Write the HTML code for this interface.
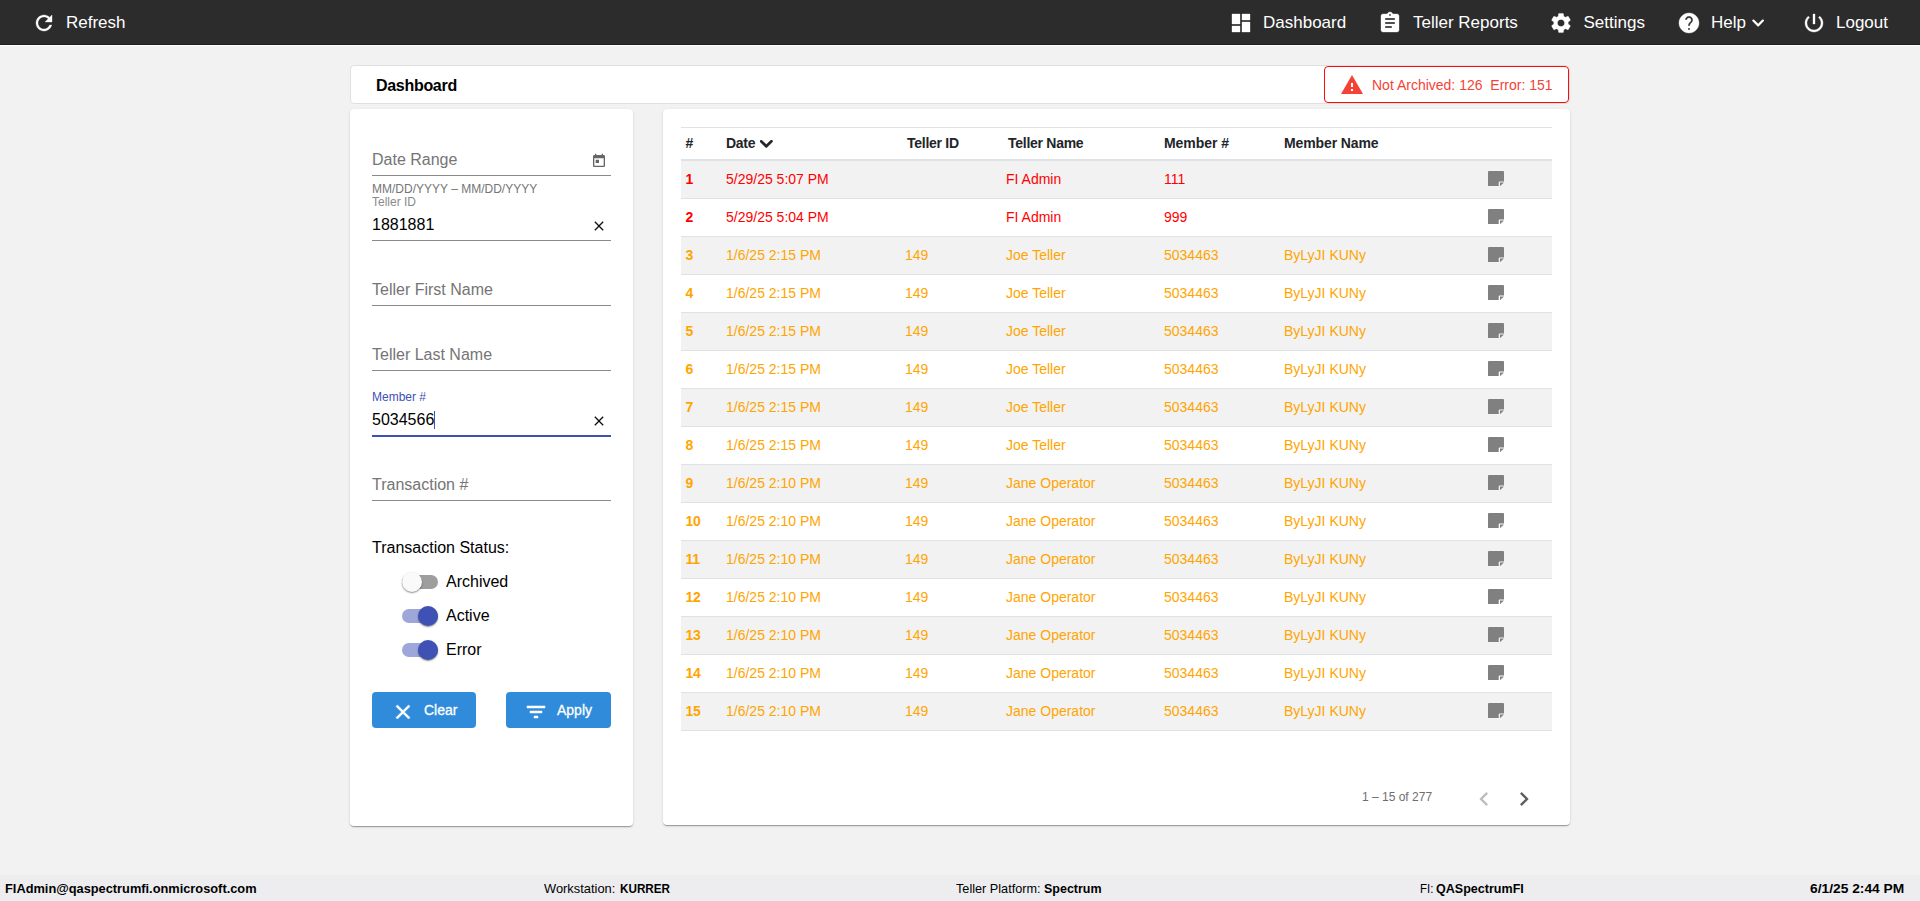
<!DOCTYPE html>
<html lang="en">
<head>
<meta charset="utf-8">
<title>Dashboard</title>
<style>
*{box-sizing:border-box;margin:0;padding:0}
html,body{width:1920px;height:901px;overflow:hidden}
body{background:#f2f2f2;font-family:"Liberation Sans",Arial,sans-serif;color:#000;position:relative}
.abs{position:absolute}
/* nav */
#nav{position:absolute;left:0;top:0;width:1920px;height:46px;background:#2c2c2c;border-bottom:1px solid #fff}
#nav:after{content:'';position:absolute;left:0;top:44px;width:1920px;height:1px;background:#1e1e1e}
.ni{position:absolute;top:11px;height:24px;white-space:nowrap;color:#fff;font-size:17px;line-height:24px}
.ni svg{position:absolute;left:0;top:0;width:24px;height:24px;fill:#fff;stroke:#fff;stroke-width:.35}
.ni span{position:absolute;top:0px}
/* title */
#title{position:absolute;left:350px;top:65px;width:1220px;height:39px;background:#fff;border:1px solid #e0e0e0;border-radius:4px}
#title span{position:absolute;left:25px;top:10px;font-weight:bold;font-size:16px;letter-spacing:-.3px;line-height:20px;color:#000}
#alert{position:absolute;left:1324px;top:66px;width:245px;height:37px;background:#fff;border:1px solid #fd0a0a;border-radius:4px;color:#f44336;font-size:14px}
#alert svg{position:absolute;left:15px;top:6px;width:24px;height:24px;fill:#f44336}
#alert span{position:absolute;left:47px;top:10px;line-height:16px;white-space:pre}
/* panels */
.card{position:absolute;background:#fff;border-radius:4px;box-shadow:0 2px 1px -1px rgba(0,0,0,.2),0 1px 1px 0 rgba(0,0,0,.14),0 1px 3px 0 rgba(0,0,0,.12)}
#left{left:350px;top:109px;width:283px;height:717px}
#right{left:663px;top:109px;width:907px;height:716px}
/* form */
.lbl{position:absolute;left:372px;font-size:16px;line-height:18px;color:#757575;white-space:nowrap}
.sm{position:absolute;left:372px;font-size:12px;line-height:14px;color:#757575;white-space:nowrap}
.val{position:absolute;left:372px;font-size:16px;line-height:18px;color:#000;white-space:nowrap}
.ul{position:absolute;left:372px;width:239px;height:1px;background:#8a8a8a}
.ic16{position:absolute;width:16px;height:16px}
/* toggles */
.trk{position:absolute;left:402px;width:36px;height:14px;border-radius:7px}
.thb{position:absolute;width:20px;height:20px;border-radius:50%;box-shadow:0 1px 2px rgba(0,0,0,.35),0 1px 1px rgba(0,0,0,.14)}
.tl{position:absolute;left:446px;font-size:16px;line-height:18px;color:#000}
.btn{position:absolute;top:692px;height:36px;background:#308cdb;border-radius:4px;color:#fff;font-size:14px;-webkit-text-stroke:.3px #fff}
.btn svg{position:absolute;top:8px;width:24px;height:24px;fill:#fff;stroke:#fff;stroke-width:.5}
.btn span{position:absolute;top:10px;line-height:16px}
/* table */
table{position:absolute;left:681px;top:127px;width:871px;border-collapse:separate;border-spacing:0;font-size:14px;table-layout:fixed}
th{height:34px;border-top:1px solid #dee2e6;border-bottom:2px solid #dee2e6;text-align:left;font-weight:bold;font-size:14px;letter-spacing:-0.27px;color:#212529;padding:0 0 2px 5px;vertical-align:middle;white-space:nowrap}
td{height:38px;border-bottom:1px solid #dee2e6;padding:0 0 2px 4px;vertical-align:middle;white-space:nowrap;line-height:16px}
tr:nth-child(odd) td{background:#f2f2f2}
tr.r td{color:#ff0000}
tr.o td{color:#ffa500}
td.c0{font-weight:bold;padding-left:4.5px;letter-spacing:-.35px}
td.c1,td.c4,td.c5{padding-left:5px}
th.h2,th.h3{padding-left:6px}
.note{width:16px;height:15.2px;fill:#808080;display:block;position:relative;left:1px;top:0px}
.chev{display:inline-block;width:12.6px;height:7.6px;fill:#212529;stroke:#212529;stroke-width:18;margin-left:5px;position:relative;top:0px}
/* pager */
#pg{position:absolute;left:1362px;top:790px;font-size:12px;line-height:14px;color:#6e6e6e;white-space:nowrap}
.pb{position:absolute;top:785px;width:28px;height:28px}
/* footer */
#foot{position:absolute;left:0;top:875px;width:1920px;height:26px;background:#ededef;font-size:13px;color:#000}
#foot span{position:absolute;top:6px;line-height:16px;white-space:pre;transform-origin:0 0}
#foot .fb{font-weight:bold}
</style>
</head>
<body>
<div id="nav">
  <div class="ni" style="left:32px"><svg viewBox="0 0 24 24"><path d="M17.65 6.35C16.2 4.9 14.21 4 12 4c-4.42 0-7.99 3.58-7.99 8s3.57 8 7.99 8c3.73 0 6.84-2.55 7.73-6h-2.08c-.82 2.33-3.04 4-5.65 4-3.31 0-6-2.69-6-6s2.69-6 6-6c1.66 0 3.14.69 4.22 1.78L13 11h7V4l-2.35 2.35z"/></svg><span style="left:34px">Refresh</span></div>
  <div class="ni" style="left:1229px"><svg viewBox="0 0 24 24"><path d="M3 13h8V3H3v10zm0 8h8v-6H3v6zm10 0h8V11h-8v10zm0-18v6h8V3h-8z"/></svg><span style="left:34px">Dashboard</span></div>
  <div class="ni" style="left:1378px"><svg viewBox="0 0 24 24"><path d="M19 3h-4.18C14.4 1.84 13.3 1 12 1c-1.3 0-2.4.84-2.82 2H5c-1.1 0-2 .9-2 2v14c0 1.1.9 2 2 2h14c1.1 0 2-.9 2-2V5c0-1.1-.9-2-2-2zm-7 0c.55 0 1 .45 1 1s-.45 1-1 1-1-.45-1-1 .45-1 1-1zm2 14H7v-2h7v2zm3-4H7v-2h10v2zm0-4H7V7h10v2z"/></svg><span style="left:35px">Teller Reports</span></div>
  <div class="ni" style="left:1549px"><svg viewBox="0 0 24 24"><path d="M19.14 12.94c.04-.3.06-.61.06-.94 0-.32-.02-.64-.07-.94l2.03-1.58c.18-.14.23-.41.12-.61l-1.92-3.32c-.12-.22-.37-.29-.59-.22l-2.39.96c-.5-.38-1.03-.7-1.62-.94l-.36-2.54c-.04-.24-.24-.41-.48-.41h-3.84c-.24 0-.43.17-.47.41l-.36 2.54c-.59.24-1.13.57-1.62.94l-2.39-.96c-.22-.08-.47 0-.59.22L2.74 8.87c-.12.21-.08.47.12.61l2.03 1.58c-.05.3-.09.63-.09.94s.02.64.07.94l-2.03 1.58c-.18.14-.23.41-.12.61l1.92 3.32c.12.22.37.29.59.22l2.39-.96c.5.38 1.03.7 1.62.94l.36 2.54c.05.24.24.41.48.41h3.84c.24 0 .44-.17.47-.41l.36-2.54c.59-.24 1.13-.56 1.62-.94l2.39.96c.22.08.47 0 .59-.22l1.92-3.32c.12-.22.07-.47-.12-.61l-2.01-1.58zM12 15.6c-1.98 0-3.6-1.62-3.6-3.6s1.62-3.6 3.6-3.6 3.6 1.62 3.6 3.6-1.62 3.6-3.6 3.6z"/></svg><span style="left:34.5px">Settings</span></div>
  <div class="ni" style="left:1677px"><svg viewBox="0 0 24 24"><path d="M12 2C6.48 2 2 6.48 2 12s4.48 10 10 10 10-4.48 10-10S17.52 2 12 2zm1 17h-2v-2h2v2zm2.07-7.75l-.9.92C13.45 12.9 13 13.5 13 15h-2v-.5c0-1.1.45-2.1 1.17-2.83l1.24-1.26c.37-.36.59-.86.59-1.41 0-1.1-.9-2-2-2s-2 .9-2 2H8c0-2.21 1.79-4 4-4s4 1.790 4 4c0 .88-.36 1.68-.93 2.25z"/></svg><span style="left:34px">Help</span><svg viewBox="0 0 448 512" style="left:75px;top:5.2px;width:12.25px;height:14px"><path d="M207.029 381.476L12.686 187.132c-9.373-9.373-9.373-24.569 0-33.941l22.667-22.667c9.357-9.357 24.522-9.375 33.901-.04L224 284.505l154.745-154.021c9.379-9.335 24.544-9.317 33.901.04l22.667 22.667c9.373 9.373 9.373 24.569 0 33.941L240.971 381.476c-9.373 9.372-24.569 9.372-33.942 0z"/></svg></div>
  <div class="ni" style="left:1802px"><svg viewBox="0 0 24 24"><path d="M13 3h-2v10h2V3zm4.83 2.17l-1.42 1.42C17.99 7.86 19 9.81 19 12c0 3.87-3.13 7-7 7s-7-3.13-7-7c0-2.19 1.01-4.140 2.58-5.420L6.170 5.170C4.230 6.820 3 9.260 3 12c0 4.970 4.030 9 9 9s9-4.030 9-9c0-2.740-1.230-5.180-3.170-6.830z"/></svg><span style="left:34px">Logout</span></div>
</div>

<div id="title"><span>Dashboard</span></div>
<div id="alert"><svg viewBox="0 0 24 24"><path d="M1 21h22L12 2 1 21zm12-3h-2v-2h2v2zm0-4h-2v-4h2v4z"/></svg><span>Not Archived: 126&nbsp; Error: 151</span></div>

<div class="card" id="left"></div>
<div class="card" id="right"></div>

<!-- form -->
<div class="lbl" style="top:151px">Date Range</div>
<svg class="ic16" style="left:591px;top:153px" viewBox="0 0 24 24"><path fill="#666" d="M19 3h-1V1h-2v2H8V1H6v2H5c-1.11 0-1.99.9-1.99 2L3 19c0 1.1.89 2 2 2h14c1.1 0 2-.9 2-2V5c0-1.1-.9-2-2-2zm0 16H5V8h14v11zM7 10h5v5H7z"/></svg>
<div class="ul" style="top:175px"></div>
<div class="sm" style="top:182px">MM/DD/YYYY – MM/DD/YYYY</div>
<div class="sm" style="top:195px;color:#8a8a8a">Teller ID</div>
<div class="val" style="top:216px">1881881</div>
<svg class="ic16" style="left:591px;top:218px" viewBox="0 0 24 24"><path fill="#111" d="M19 6.41L17.59 5 12 10.59 6.41 5 5 6.41 10.59 12 5 17.59 6.41 19 12 13.41 17.59 19 19 17.59 13.41 12z"/></svg>
<div class="ul" style="top:240px"></div>
<div class="lbl" style="top:281px">Teller First Name</div>
<div class="ul" style="top:305px"></div>
<div class="lbl" style="top:346px">Teller Last Name</div>
<div class="ul" style="top:370px"></div>
<div class="sm" style="top:390px;color:#3f51b5">Member #</div>
<div class="val" style="top:411px">5034566</div>
<div class="abs" style="left:434px;top:411px;width:1px;height:18px;background:#3f51b5"></div>
<svg class="ic16" style="left:591px;top:413px" viewBox="0 0 24 24"><path fill="#111" d="M19 6.41L17.59 5 12 10.59 6.41 5 5 6.41 10.590 12 5 17.59 6.41 19 12 13.41 17.59 19 19 17.59 13.41 12z"/></svg>
<div class="ul" style="top:435px;height:2px;background:#3f51b5"></div>
<div class="lbl" style="top:476px">Transaction #</div>
<div class="ul" style="top:500px"></div>
<div class="val" style="top:539px">Transaction Status:</div>

<div class="trk" style="top:575px;background:#9e9e9e"></div><div class="thb" style="left:402px;top:572px;background:#fafafa"></div><div class="tl" style="top:573px">Archived</div>
<div class="trk" style="top:609px;background:#9ea7da"></div><div class="thb" style="left:418px;top:606px;background:#3f51b5"></div><div class="tl" style="top:607px">Active</div>
<div class="trk" style="top:643px;background:#9ea7da"></div><div class="thb" style="left:418px;top:640px;background:#3f51b5"></div><div class="tl" style="top:641px">Error</div>

<div class="btn" style="left:372px;width:104px"><svg style="left:18.5px" viewBox="0 0 24 24"><path d="M19 6.41L17.59 5 12 10.59 6.41 5 5 6.41 10.59 12 5 17.59 6.41 19 12 13.41 17.59 19 19 17.59 13.41 12z"/></svg><span style="left:52px">Clear</span></div>
<div class="btn" style="left:506px;width:105px"><svg style="left:18px" viewBox="0 0 24 24"><path d="M10 18h4v-2h-4v2zM3 6v2h18V6H3zm3 7h12v-2H6v2z"/></svg><span style="left:51px">Apply</span></div>

<!-- table -->
<table>
<colgroup><col style="width:40px"><col style="width:180px"><col style="width:101px"><col style="width:157px"><col style="width:120px"><col style="width:204px"><col></colgroup>
<thead><tr><th style="padding-left:4.5px">#</th><th>Date<svg class="chev" viewBox="12 123 424 266" preserveAspectRatio="none"><path d="M207.029 381.476L12.686 187.132c-9.373-9.373-9.373-24.569 0-33.941l22.667-22.667c9.357-9.357 24.522-9.375 33.901-.04L224 284.505l154.745-154.021c9.379-9.335 24.544-9.317 33.901.04l22.667 22.667c9.373 9.373 9.373 24.569 0 33.941L240.971 381.476c-9.373 9.372-24.569 9.372-33.942 0z"/></svg></th><th class="h2">Teller ID</th><th class="h3">Teller Name</th><th style="letter-spacing:-.06px">Member #</th><th style="letter-spacing:-.115px">Member Name</th><th></th></tr></thead>
<tbody>
<tr class="r"><td class="c0">1</td><td class="c1">5/29/25 5:07 PM</td><td class="c2"></td><td class="c3">FI Admin</td><td class="c4">111</td><td class="c5"></td><td class="c6"><svg class="note" viewBox="0 0 16 15.2"><path d="M.9 0H15.1A.9.9 0 0 1 16 .9V10.4H11.6A.9.9 0 0 0 10.7 11.3V15.2H.9A.9.9 0 0 1 0 14.3V.9A.9.9 0 0 1 .9 0ZM12 11.5H16L12 15.2Z"/></svg></td></tr>
<tr class="r"><td class="c0">2</td><td class="c1">5/29/25 5:04 PM</td><td class="c2"></td><td class="c3">FI Admin</td><td class="c4">999</td><td class="c5"></td><td class="c6"><svg class="note" viewBox="0 0 16 15.2"><path d="M.9 0H15.1A.9.9 0 0 1 16 .9V10.4H11.6A.9.9 0 0 0 10.7 11.3V15.2H.9A.9.9 0 0 1 0 14.3V.9A.9.9 0 0 1 .9 0ZM12 11.5H16L12 15.2Z"/></svg></td></tr>
<tr class="o"><td class="c0">3</td><td class="c1">1/6/25 2:15 PM</td><td class="c2">149</td><td class="c3">Joe Teller</td><td class="c4">5034463</td><td class="c5">ByLyJI KUNy</td><td class="c6"><svg class="note" viewBox="0 0 16 15.2"><path d="M.9 0H15.1A.9.9 0 0 1 16 .9V10.4H11.6A.9.9 0 0 0 10.7 11.3V15.2H.9A.9.9 0 0 1 0 14.3V.9A.9.9 0 0 1 .9 0ZM12 11.5H16L12 15.2Z"/></svg></td></tr>
<tr class="o"><td class="c0">4</td><td class="c1">1/6/25 2:15 PM</td><td class="c2">149</td><td class="c3">Joe Teller</td><td class="c4">5034463</td><td class="c5">ByLyJI KUNy</td><td class="c6"><svg class="note" viewBox="0 0 16 15.2"><path d="M.9 0H15.1A.9.9 0 0 1 16 .9V10.4H11.6A.9.9 0 0 0 10.7 11.3V15.2H.9A.9.9 0 0 1 0 14.3V.9A.9.9 0 0 1 .9 0ZM12 11.5H16L12 15.2Z"/></svg></td></tr>
<tr class="o"><td class="c0">5</td><td class="c1">1/6/25 2:15 PM</td><td class="c2">149</td><td class="c3">Joe Teller</td><td class="c4">5034463</td><td class="c5">ByLyJI KUNy</td><td class="c6"><svg class="note" viewBox="0 0 16 15.2"><path d="M.9 0H15.1A.9.9 0 0 1 16 .9V10.4H11.6A.9.9 0 0 0 10.7 11.3V15.2H.9A.9.9 0 0 1 0 14.3V.9A.9.9 0 0 1 .9 0ZM12 11.5H16L12 15.2Z"/></svg></td></tr>
<tr class="o"><td class="c0">6</td><td class="c1">1/6/25 2:15 PM</td><td class="c2">149</td><td class="c3">Joe Teller</td><td class="c4">5034463</td><td class="c5">ByLyJI KUNy</td><td class="c6"><svg class="note" viewBox="0 0 16 15.2"><path d="M.9 0H15.1A.9.9 0 0 1 16 .9V10.4H11.6A.9.9 0 0 0 10.7 11.3V15.2H.9A.9.9 0 0 1 0 14.3V.9A.9.9 0 0 1 .9 0ZM12 11.5H16L12 15.2Z"/></svg></td></tr>
<tr class="o"><td class="c0">7</td><td class="c1">1/6/25 2:15 PM</td><td class="c2">149</td><td class="c3">Joe Teller</td><td class="c4">5034463</td><td class="c5">ByLyJI KUNy</td><td class="c6"><svg class="note" viewBox="0 0 16 15.2"><path d="M.9 0H15.1A.9.9 0 0 1 16 .9V10.4H11.6A.9.9 0 0 0 10.7 11.3V15.2H.9A.9.9 0 0 1 0 14.3V.9A.9.9 0 0 1 .9 0ZM12 11.5H16L12 15.2Z"/></svg></td></tr>
<tr class="o"><td class="c0">8</td><td class="c1">1/6/25 2:15 PM</td><td class="c2">149</td><td class="c3">Joe Teller</td><td class="c4">5034463</td><td class="c5">ByLyJI KUNy</td><td class="c6"><svg class="note" viewBox="0 0 16 15.2"><path d="M.9 0H15.1A.9.9 0 0 1 16 .9V10.4H11.6A.9.9 0 0 0 10.7 11.3V15.2H.9A.9.9 0 0 1 0 14.3V.9A.9.9 0 0 1 .9 0ZM12 11.5H16L12 15.2Z"/></svg></td></tr>
<tr class="o"><td class="c0">9</td><td class="c1">1/6/25 2:10 PM</td><td class="c2">149</td><td class="c3">Jane Operator</td><td class="c4">5034463</td><td class="c5">ByLyJI KUNy</td><td class="c6"><svg class="note" viewBox="0 0 16 15.2"><path d="M.9 0H15.1A.9.9 0 0 1 16 .9V10.4H11.6A.9.9 0 0 0 10.7 11.3V15.2H.9A.9.9 0 0 1 0 14.3V.9A.9.9 0 0 1 .9 0ZM12 11.5H16L12 15.2Z"/></svg></td></tr>
<tr class="o"><td class="c0">10</td><td class="c1">1/6/25 2:10 PM</td><td class="c2">149</td><td class="c3">Jane Operator</td><td class="c4">5034463</td><td class="c5">ByLyJI KUNy</td><td class="c6"><svg class="note" viewBox="0 0 16 15.2"><path d="M.9 0H15.1A.9.9 0 0 1 16 .9V10.4H11.6A.9.9 0 0 0 10.7 11.3V15.2H.9A.9.9 0 0 1 0 14.3V.9A.9.9 0 0 1 .9 0ZM12 11.5H16L12 15.2Z"/></svg></td></tr>
<tr class="o"><td class="c0">11</td><td class="c1">1/6/25 2:10 PM</td><td class="c2">149</td><td class="c3">Jane Operator</td><td class="c4">5034463</td><td class="c5">ByLyJI KUNy</td><td class="c6"><svg class="note" viewBox="0 0 16 15.2"><path d="M.9 0H15.1A.9.9 0 0 1 16 .9V10.4H11.6A.9.9 0 0 0 10.7 11.3V15.2H.9A.9.9 0 0 1 0 14.3V.9A.9.9 0 0 1 .9 0ZM12 11.5H16L12 15.2Z"/></svg></td></tr>
<tr class="o"><td class="c0">12</td><td class="c1">1/6/25 2:10 PM</td><td class="c2">149</td><td class="c3">Jane Operator</td><td class="c4">5034463</td><td class="c5">ByLyJI KUNy</td><td class="c6"><svg class="note" viewBox="0 0 16 15.2"><path d="M.9 0H15.1A.9.9 0 0 1 16 .9V10.4H11.6A.9.9 0 0 0 10.7 11.3V15.2H.9A.9.9 0 0 1 0 14.3V.9A.9.9 0 0 1 .9 0ZM12 11.5H16L12 15.2Z"/></svg></td></tr>
<tr class="o"><td class="c0">13</td><td class="c1">1/6/25 2:10 PM</td><td class="c2">149</td><td class="c3">Jane Operator</td><td class="c4">5034463</td><td class="c5">ByLyJI KUNy</td><td class="c6"><svg class="note" viewBox="0 0 16 15.2"><path d="M.9 0H15.1A.9.9 0 0 1 16 .9V10.4H11.6A.9.9 0 0 0 10.7 11.3V15.2H.9A.9.9 0 0 1 0 14.3V.9A.9.9 0 0 1 .9 0ZM12 11.5H16L12 15.2Z"/></svg></td></tr>
<tr class="o"><td class="c0">14</td><td class="c1">1/6/25 2:10 PM</td><td class="c2">149</td><td class="c3">Jane Operator</td><td class="c4">5034463</td><td class="c5">ByLyJI KUNy</td><td class="c6"><svg class="note" viewBox="0 0 16 15.2"><path d="M.9 0H15.1A.9.9 0 0 1 16 .9V10.4H11.6A.9.9 0 0 0 10.7 11.3V15.2H.9A.9.9 0 0 1 0 14.3V.9A.9.9 0 0 1 .9 0ZM12 11.5H16L12 15.2Z"/></svg></td></tr>
<tr class="o"><td class="c0">15</td><td class="c1">1/6/25 2:10 PM</td><td class="c2">149</td><td class="c3">Jane Operator</td><td class="c4">5034463</td><td class="c5">ByLyJI KUNy</td><td class="c6"><svg class="note" viewBox="0 0 16 15.2"><path d="M.9 0H15.1A.9.9 0 0 1 16 .9V10.4H11.6A.9.9 0 0 0 10.7 11.3V15.2H.9A.9.9 0 0 1 0 14.3V.9A.9.9 0 0 1 .9 0ZM12 11.5H16L12 15.2Z"/></svg></td></tr>
</tbody>
</table>

<div id="pg">1 – 15 of 277</div>
<svg class="pb" style="left:1470px" viewBox="0 0 24 24"><path fill="#bdbdbd" d="M15.41 7.41L14 6l-6 6 6 6 1.41-1.41L10.83 12z"/></svg>
<svg class="pb" style="left:1510px" viewBox="0 0 24 24"><path fill="#5e5e5e" d="M10 6L8.59 7.41 13.17 12l-4.58 4.59L10 18l6-6z"/></svg>

<div id="foot">
  <span class="fb" style="left:5px;transform:scaleX(.985)">FIAdmin@qaspectrumfi.onmicrosoft.com</span>
  <span class="fr" style="left:544px;transform:scaleX(.99)">Workstation:</span>
  <span class="fb" style="left:619.5px;transform:scaleX(.90)">KURRER</span>
  <span class="fr" style="left:956px;transform:scaleX(.975)">Teller Platform:</span>
  <span class="fb" style="left:1044px;transform:scaleX(.96)">Spectrum</span>
  <span class="fr" style="left:1419.5px;transform:scaleX(.88)">FI:</span>
  <span class="fb" style="left:1435.5px;transform:scaleX(.965)">QASpectrumFI</span>
  <span class="fb" style="left:1810px;transform:scaleX(1.06)">6/1/25 2:44 PM</span>
</div>
</body>
</html>
